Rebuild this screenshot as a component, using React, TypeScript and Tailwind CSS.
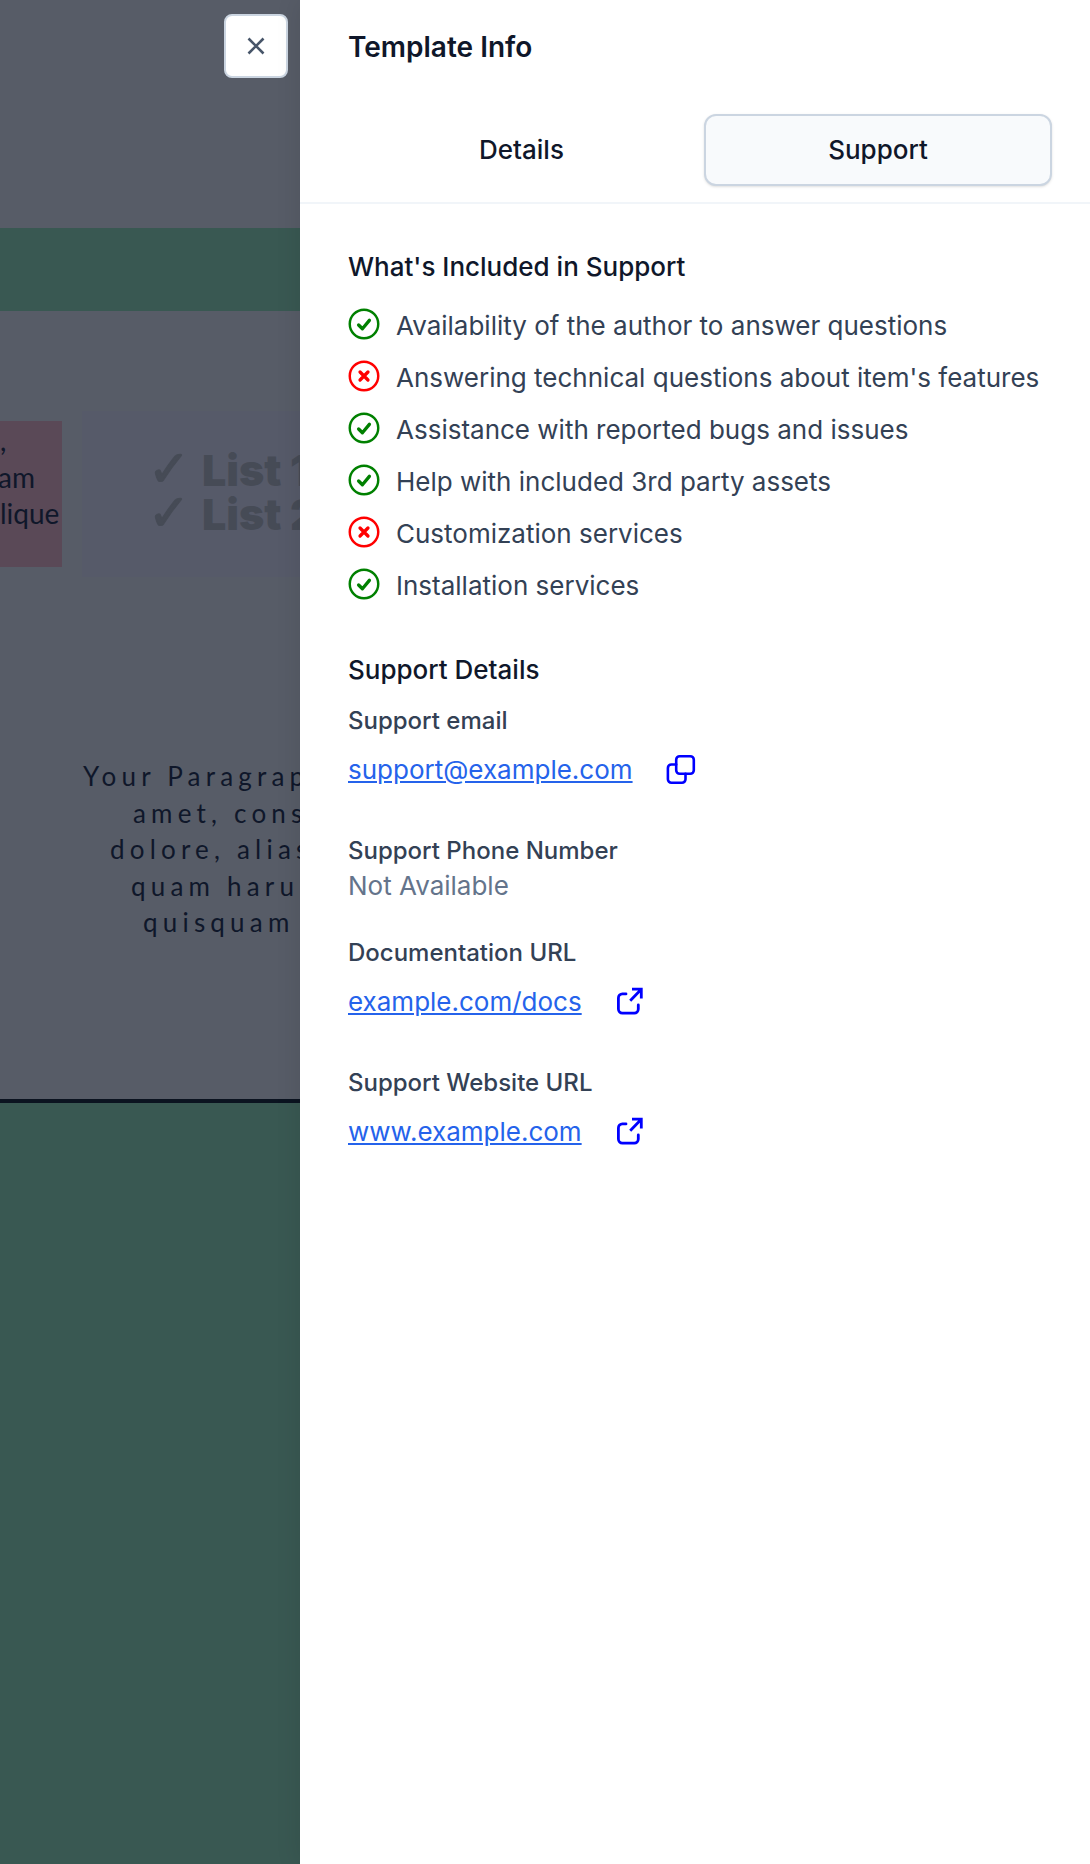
const checks: [string, boolean][] = [
  ["Availability of the author to answer questions", true],
  ["Answering technical questions about item's features", false],
  ["Assistance with reported bugs and issues", true],
  ["Help with included 3rd party assets", true],
  ["Customization services", false],
  ["Installation services", true],
];

function StatusIcon({ ok }: { ok: boolean }) {
  return (
    <svg
      viewBox="0 0 24 24"
      fill="none"
      strokeLinecap="round"
      strokeLinejoin="round"
      className={`w-[38px] h-[38px] flex-none -ml-[3px] mb-[4px] ${ok ? "stroke-[#008000]" : "stroke-[#ff0000]"}`}
    >
      <path strokeWidth={1.55} d="M21 12a9 9 0 1 1-18 0 9 9 0 0 1 18 0Z" />
      {ok ? (
        <path strokeWidth={2.1} d="M8.6 12.6 11 15 15.4 9.7" />
      ) : (
        <path strokeWidth={2.1} d="m9.5 9.5 5 5m0-5-5 5" />
      )}
    </svg>
  );
}

function CopyIcon() {
  return (
    <svg
      viewBox="0 0 34 34"
      fill="none"
      stroke="#0000ff"
      strokeWidth={2.6}
      strokeLinecap="round"
      strokeLinejoin="round"
      className="w-[34px] h-[34px] flex-none"
    >
      <rect x="12.2" y="3.2" width="17.6" height="17.6" rx="3.5" />
      <path d="M12.2 11.5H7.4a3.5 3.5 0 0 0-3.5 3.5v11.3a3.5 3.5 0 0 0 3.5 3.5H18a3.5 3.5 0 0 0 3.5-3.5v-5.5" />
    </svg>
  );
}

function ExternalIcon() {
  return (
    <svg
      viewBox="0 0 34 34"
      fill="none"
      stroke="#0000ff"
      strokeWidth={2.8}
      className="w-[34px] h-[34px] flex-none -ml-px"
    >
      <path strokeLinecap="round" d="M14 8.9h-3.6a4 4 0 0 0-4 4v11.2a4 4 0 0 0 4 4h11.9a4 4 0 0 0 4-4V20" />
      <path d="M20 4.2h9.3v9.3M18.2 15.7 29.3 4.2" />
    </svg>
  );
}

function ListLine({ n }: { n: number }) {
  return (
    <div>
      <span className="inline-block w-[54px] -ml-[4px] font-['DejaVu_Sans',sans-serif] font-bold text-[50px] leading-[43px] [-webkit-text-stroke:1.5px_#464b56]">
        ✓
      </span>
      List {n}
    </div>
  );
}

function Backdrop() {
  return (
    <div className="relative w-[300px] flex-none h-full overflow-hidden flex flex-col bg-[#575c67] font-['Lato',sans-serif] text-[#0f172a]">
      <div className="h-[228px] flex-none" />
      <div className="h-[83px] flex-none bg-[#395852]" />
      <div className="h-[100px] flex-none" />

      <div className="h-[166px] flex-none flex items-center gap-5 whitespace-nowrap">
        <div className="w-[62px] h-[146px] flex-none bg-[#5a4957] overflow-hidden text-[28px] leading-[36.5px] pt-px">
          <div>,</div>
          <div className="-ml-[2px]">am</div>
          <div>lique</div>
        </div>
        <div className="w-[240px] h-[166px] flex-none bg-[#565a69] pl-[70px] pt-[37px] font-['Inter',sans-serif] font-black text-[#464b56] text-[43px] leading-[43px]">
          <ListLine n={1} />
          <ListLine n={2} />
        </div>
      </div>

      <div className="h-[181px] flex-none" />
      <div className="h-[187px] flex-none text-[26px] leading-[36.5px] tracking-[0.2em] whitespace-nowrap">
        <div className="pl-[83px]">Your Paragraph</div>
        <div className="pl-[133px]">amet, consectetur</div>
        <div className="pl-[110px]">dolore, alias</div>
        <div className="pl-[131px]">quam harum</div>
        <div className="pl-[143px]">quisquam</div>
      </div>

      <div className="grow" />
      <div className="h-1 flex-none bg-[#0b1320]" />
      <div className="h-[761px] flex-none bg-[#395852]" />

      <button className="absolute left-[224px] top-[14px] w-16 h-16 flex items-center justify-center bg-white border-2 border-[#cbd5e1] rounded-lg">
        <svg viewBox="0 0 24 24" fill="none" stroke="#475569" strokeWidth={2.6} strokeLinejoin="round" className="w-6 h-6">
          <path d="M4.5 4.5 19.5 19.5M19.5 4.5 4.5 19.5" />
        </svg>
      </button>
    </div>
  );
}

function Label({ children, className }: { children: string; className: string }) {
  return <div className={`text-[24px] leading-[32px] font-[450] text-[#334155] ${className}`}>{children}</div>;
}

function LinkRow({ href, icon }: { href: string; icon: React.ReactNode }) {
  return (
    <div className="flex items-center gap-[31px] h-9 mt-[15px]">
      <a className="text-[#2563eb] underline">{href}</a>
      {icon}
    </div>
  );
}

export default function App() {
  return (
    <div className="flex w-[1090px] h-[1864px] overflow-hidden font-['Inter',sans-serif] text-[26px] leading-9">
      <Backdrop />
      <aside className="relative w-[790px] flex-none bg-white shadow-[0_0_24px_rgba(0,0,0,0.1)]">
        <div className="pl-12 pt-[29px] text-[28px] leading-9 font-semibold text-[#0f172a]">Template Info</div>
        <div className="flex gap-[9px] pl-12 pr-[37px] mt-[49px]">
          <button className="w-[347px] h-[72px] text-[#0f172a] font-[450]">Details</button>
          <button className="w-[348px] h-[72px] bg-[#f8fafc] border-2 border-[#cbd5e1] rounded-xl shadow-sm text-[#0f172a] font-[450]">
            Support
          </button>
        </div>
        <div className="h-[2px] mt-4 bg-[#f1f5f9]" />

        <div className="pl-12 pt-[45px]">
          <h2 className="font-[450] text-[#0f172a]">What's Included in Support</h2>
          <ul className="mt-[23px] flex flex-col gap-4">
            {checks.map(([text, ok]) => (
              <li key={text} className="flex items-center gap-[13px] text-[#334155] h-9">
                <StatusIcon ok={ok} />
                <span>{text}</span>
              </li>
            ))}
          </ul>

          <h2 className="mt-12 font-[450] text-[#0f172a]">Support Details</h2>
          <Label className="mt-[17px]">Support email</Label>
          <LinkRow href="support@example.com" icon={<CopyIcon />} />
          <Label className="mt-[47px]">Support Phone Number</Label>
          <div className="mt-px text-[#64748b]">Not Available</div>
          <Label className="mt-[33px]">Documentation URL</Label>
          <LinkRow href="example.com/docs" icon={<ExternalIcon />} />
          <Label className="mt-[47px]">Support Website URL</Label>
          <LinkRow href="www.example.com" icon={<ExternalIcon />} />
        </div>
      </aside>
    </div>
  );
}
